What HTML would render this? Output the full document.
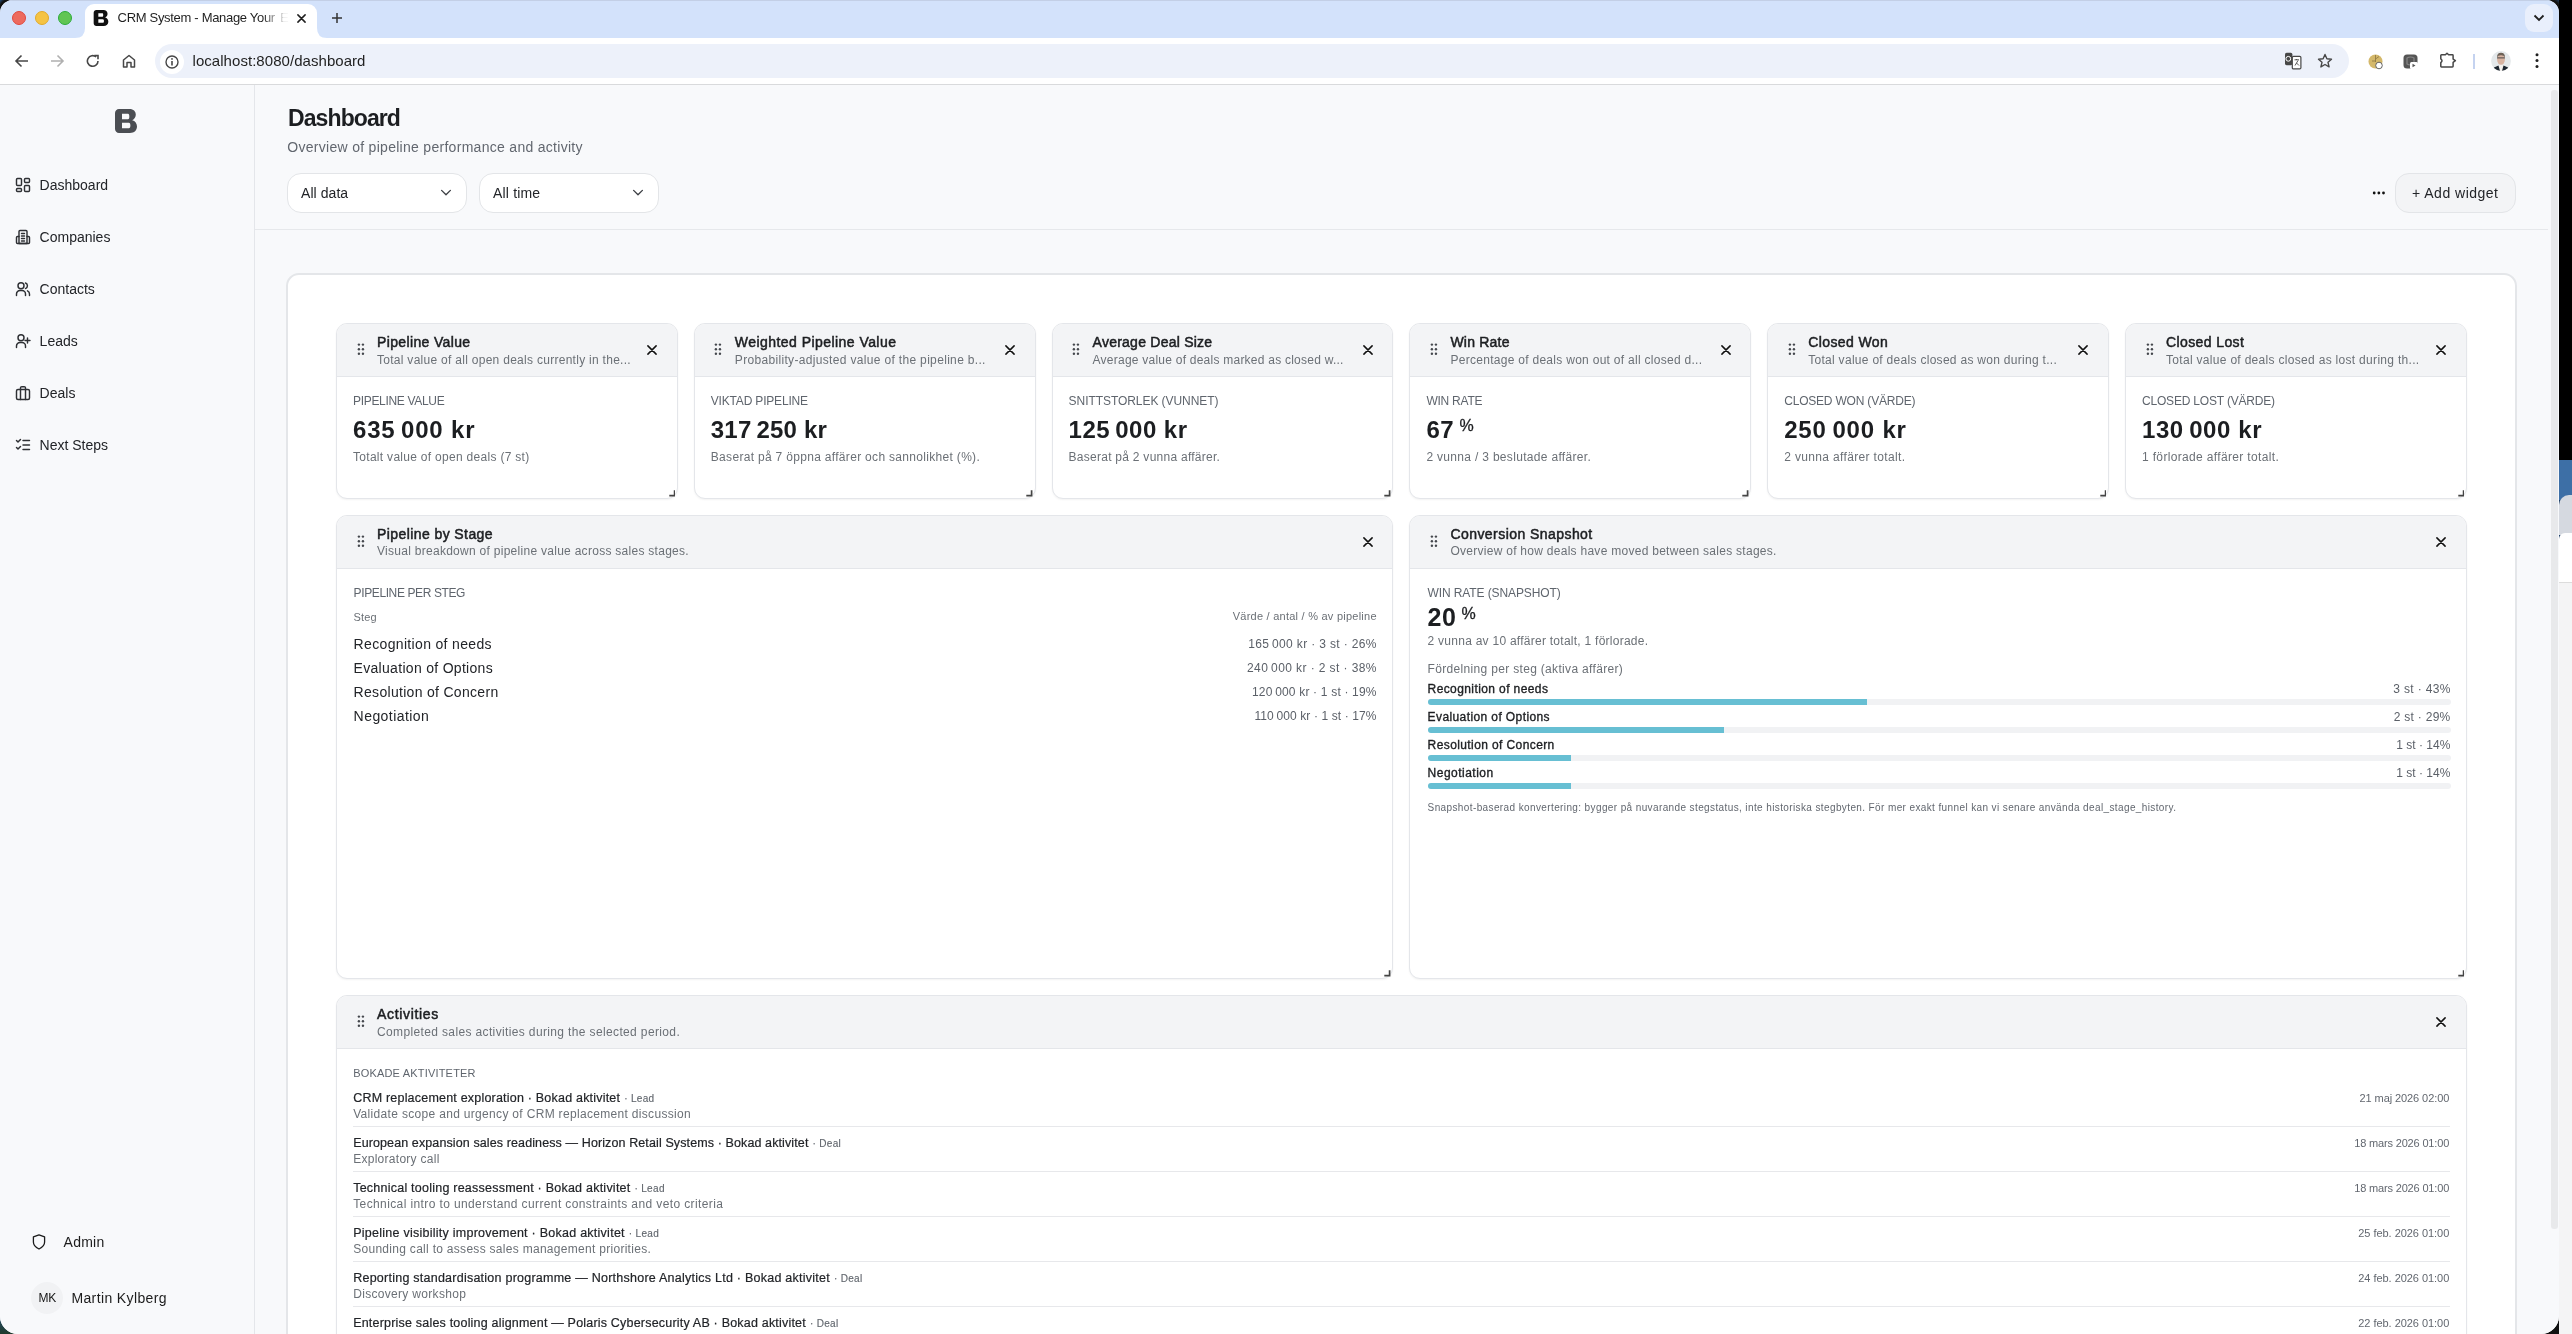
<!DOCTYPE html><html><head><meta charset="utf-8"><style>
html,body{margin:0;padding:0;}
body{width:2572px;height:1334px;overflow:hidden;position:relative;background:#1d3f66;font-family:"Liberation Sans",sans-serif;}
.b{position:absolute;box-sizing:border-box;}
.t{position:absolute;white-space:nowrap;}
#win{will-change:transform;}
</style></head><body>
<div class="b" style="left:2559.00px;top:0.00px;width:13.00px;height:460.00px;background:#000;"></div>
<div class="b" style="left:0.00px;top:0.00px;width:30.00px;height:30.00px;background:radial-gradient(circle at 13px 13px,#000 0,#111 15px,#2b5a90 19px);"></div>
<div class="b" style="left:2530.00px;top:0.00px;width:29.00px;height:30.00px;background:radial-gradient(circle at 16px 13px,#000 0,#111 15px,#24507f 20px);"></div>
<div class="b" style="left:0.00px;top:1300.00px;width:40.00px;height:34.00px;background:linear-gradient(180deg,#2a5a9a,#1f3a2c);"></div>
<div class="b" style="left:2520.00px;top:1300.00px;width:39.00px;height:34.00px;background:#111;"></div>
<div class="b" style="left:2559.00px;top:460.00px;width:13.00px;height:40.00px;background:#3d6fa6;"></div>
<div class="b" style="left:2559.00px;top:495.00px;width:13.00px;height:40.00px;background:#d5d9e0;border-top-left-radius:10px;"></div>
<div class="b" style="left:2559.00px;top:533.00px;width:13.00px;height:50.00px;background:#fff;border-top-left-radius:6px;"></div>
<div class="b" style="left:2559.00px;top:582.00px;width:13.00px;height:752.00px;background:#f4f4f5;border-top:1px solid #dcdcdc;"></div>
<div id="win" class="b" style="left:0;top:0;width:2559px;height:1334px;border-radius:13px 13px 18px 18px;overflow:hidden;background:#f8f9fb;">
<div class="b" style="left:0.00px;top:0.00px;width:2559.00px;height:38.00px;background:#d3e2fb;"></div>
<div class="b" style="left:0.00px;top:0.00px;width:2559.00px;height:1.00px;background:#c3cfe6;"></div>
<div class="b" style="left:85.00px;top:4.00px;width:232.00px;height:34.00px;background:#fff;border-radius:9px 9px 0 0;"></div>
<svg class="b" style="left:75px;top:28px" width="10" height="10"><path d="M0 10 Q10 10 10 0 L10 10 Z" fill="#fff"/></svg>
<svg class="b" style="left:317px;top:28px" width="10" height="10"><path d="M10 10 Q0 10 0 0 L0 10 Z" fill="#fff"/></svg>
<div class="b" style="left:12.00px;top:11.00px;width:14.00px;height:14.00px;background:#ed6a5e;border-radius:50%;border:0.5px solid #e0483e;"></div>
<div class="b" style="left:35.00px;top:11.00px;width:14.00px;height:14.00px;background:#f5c343;border-radius:50%;border:0.5px solid #e0a92a;"></div>
<div class="b" style="left:58.00px;top:11.00px;width:14.00px;height:14.00px;background:#61c554;border-radius:50%;border:0.5px solid #2dac3a;"></div>
<svg class="b" style="left:93px;top:10px" width="16" height="16" viewBox="0 0 22 24"><path d="M4 0 H14.6 C18.4 0 20.8 2.4 20.8 5.6 C20.8 8 19.6 10.2 17.2 11.3 C20.2 12 22 14.6 22 17.6 C22 21.4 19.2 24 15 24 H4 C1.8 24 0 22.2 0 20 V4 C0 1.8 1.8 0 4 0 Z M7 4.8 H13 C14 4.8 14.3 5.7 14.3 7.5 C14.3 9.3 14 10.2 13 10.2 H7 Z M7 13.8 H13.8 C15 13.8 15.4 15 15.4 16.5 C15.4 18 15 19.2 13.8 19.2 H7 Z" fill="#111" fill-rule="evenodd" transform="translate(0,0)"/></svg>
<span class="t" style="left:117.60px;top:11.30px;font-size:13px;line-height:13px;color:#1f1f1f;letter-spacing:-0.310px;">CRM System - Manage Your</span>
<div class="b" style="left:262px;top:8px;width:32px;height:20px;background:linear-gradient(90deg,rgba(255,255,255,0),#fff 70%);"></div>
<span class="t" style="left:280.00px;top:11.30px;font-size:13px;line-height:13px;color:#d0d0d0;">E</span>
<div class="b" style="left:283px;top:8px;width:10px;height:20px;background:linear-gradient(90deg,rgba(255,255,255,0.6),#fff);"></div>
<svg class="b" style="left:296.50px;top:13.50px;" width="9" height="9" viewBox="0 0 9 9"><path d="M0.9 0.9 L8.1 8.1 M8.1 0.9 L0.9 8.1" stroke="#1f1f1f" stroke-width="1.5" stroke-linecap="round"/></svg>
<svg class="b" style="left:332.00px;top:13.00px;" width="10" height="10" viewBox="0 0 10 10"><path d="M5 0 V10 M0 5 H10" stroke="#333" stroke-width="1.5"/></svg>
<div class="b" style="left:2525.00px;top:4.00px;width:28.00px;height:28.00px;background:#e9effc;border-radius:9px;"></div>
<svg class="b" style="left:2533.00px;top:14.00px;" width="12" height="8" viewBox="0 0 12 8"><path d="M1.5 1.5 L6 6 L10.5 1.5" stroke="#1f1f1f" stroke-width="1.8" fill="none"/></svg>
<div class="b" style="left:0.00px;top:38.00px;width:2559.00px;height:47.00px;background:#fff;border-bottom:1px solid #d9dadc;"></div>
<svg class="b" style="left:14.00px;top:54.00px;" width="15" height="14" viewBox="0 0 15 14"><path d="M14 7 H2 M7.5 1.5 L2 7 L7.5 12.5" stroke="#474747" stroke-width="1.6" fill="none"/></svg>
<svg class="b" style="left:50.00px;top:54.00px;" width="15" height="14" viewBox="0 0 15 14"><path d="M1 7 H13 M7.5 1.5 L13 7 L7.5 12.5" stroke="#b0b0b0" stroke-width="1.6" fill="none"/></svg>
<svg class="b" style="left:86.00px;top:54.00px;" width="14" height="14" viewBox="0 0 14 14"><path d="M12 7 A5.3 5.3 0 1 1 10.2 3" stroke="#474747" stroke-width="1.6" fill="none"/><path d="M8.3 1.5 H12 V5.2" stroke="#474747" stroke-width="1.6" fill="none"/></svg>
<svg class="b" style="left:122.00px;top:54.00px;" width="14" height="14" viewBox="0 0 14 14"><path d="M1.5 13 V6 L7 1.5 L12.5 6 V13 H9 V8.5 H5 V13 Z" stroke="#474747" stroke-width="1.5" fill="none" stroke-linejoin="round"/></svg>
<div class="b" style="left:155.00px;top:44.00px;width:2194.00px;height:34.00px;background:#edf1fa;border-radius:17px;"></div>
<div class="b" style="left:160.00px;top:49.50px;width:24.00px;height:24.00px;background:#fff;border-radius:50%;"></div>
<svg class="b" style="left:165.00px;top:54.50px;" width="14" height="14" viewBox="0 0 14 14"><circle cx="7" cy="7" r="6" stroke="#474747" stroke-width="1.4" fill="none"/><path d="M7 6 V10.5" stroke="#474747" stroke-width="1.6"/><circle cx="7" cy="3.9" r="0.9" fill="#474747"/></svg>
<span class="t" style="left:192.50px;top:53.30px;font-size:15px;line-height:15px;color:#1f1f1f;letter-spacing:0.050px;">localhost:8080/dashboard</span>
<svg class="b" style="left:2284.00px;top:52.00px;" width="18" height="18" viewBox="0 0 18 18"><rect x="1" y="0.8" width="7.4" height="12.4" rx="1.6" fill="#474747"/><circle cx="4.3" cy="6.8" r="2.4" stroke="#fff" stroke-width="1" fill="none"/><rect x="8.3" y="4.3" width="8.6" height="12.6" rx="1.2" fill="#fff" stroke="#474747" stroke-width="1.2"/><path d="M10.5 7.8 H15 M12.6 7 V8 M11 13.5 L14 8.5 M12.5 11 L15 13.5" stroke="#474747" stroke-width="0.9" fill="none"/></svg>
<svg class="b" style="left:2317.00px;top:53.00px;" width="16" height="16" viewBox="0 0 16 16"><path d="M8 1.5 L9.9 5.8 L14.5 6.2 L11 9.3 L12.1 13.9 L8 11.5 L3.9 13.9 L5 9.3 L1.5 6.2 L6.1 5.8 Z" stroke="#474747" stroke-width="1.4" fill="none" stroke-linejoin="round"/></svg>
<svg class="b" style="left:2368.00px;top:54.00px;" width="16" height="16" viewBox="0 0 16 16"><circle cx="7.5" cy="7.5" r="7" fill="#d4b86a"/><path d="M7.5 1 V8 M7.5 5 L11 2.5 M4 7 H7.5" stroke="#8a7440" stroke-width="0.8"/><circle cx="11" cy="11.5" r="3.3" fill="#fff" stroke="#555" stroke-width="0.9"/></svg>
<svg class="b" style="left:2403.00px;top:54.00px;" width="16" height="16" viewBox="0 0 16 16"><rect x="0.5" y="0.5" width="14" height="14" rx="3.5" fill="#555"/><path d="M4 4 Q7.5 2 11 4 V10 Q7.5 12 4 10 Z" fill="none" stroke="#888" stroke-width="1.2"/><rect x="7" y="8" width="8" height="7" rx="1.5" fill="#fff"/><path d="M9.5 9.7 L12.5 11.5 L9.5 13.3 Z" fill="#555"/></svg>
<svg class="b" style="left:2438.00px;top:51.00px;" width="20" height="20" viewBox="0 0 20 20"><path d="M2.8 4.5 Q2.8 3.8 3.5 3.8 H7.4 L9 2.2 L10.6 3.8 H14.4 Q15.1 3.8 15.1 4.5 V8.1 L17.4 9.7 L15.1 11.3 V15.2 Q15.1 15.9 14.4 15.9 H3.5 Q2.8 15.9 2.8 15.2 V11.6 Q5.2 9.7 2.8 7.8 Z" stroke="#474747" stroke-width="1.5" fill="none" stroke-linejoin="round"/></svg>
<div class="b" style="left:2473.00px;top:53.50px;width:1.50px;height:15.00px;background:#c5d3f0;"></div>
<svg class="b" style="left:2491.00px;top:50.70px;" width="20" height="20" viewBox="0 0 20 20"><defs><clipPath id="av"><circle cx="10" cy="10" r="9.9"/></clipPath></defs><g clip-path="url(#av)"><rect width="20" height="20" fill="#e4e8ea"/><path d="M4 20 L6 15 L10 13.5 L14 15 L16.5 20 Z" fill="#f4f1ee"/><path d="M1.5 20 L3 16.5 L7.5 14.5 L9 20 Z M18.5 20 L17 16.5 L12.5 14.5 L11 20 Z" fill="#1d2630"/><ellipse cx="10" cy="8.6" rx="3.9" ry="5.2" fill="#d8b4a2"/><path d="M5.9 6.2 Q6.2 1.8 10 1.8 Q13.8 1.8 14.1 6.2 Q12.5 4.2 10 4.3 Q7.5 4.2 5.9 6.2 Z" fill="#6e6257"/><path d="M6 6.9 H14" stroke="#3a3a3a" stroke-width="0.9"/></g></svg>
<svg class="b" style="left:2532.00px;top:50.00px;" width="10" height="22" viewBox="0 0 10 22"><circle cx="5" cy="4.80" r="1.5" fill="#1f1f1f"/><circle cx="5" cy="10.60" r="1.5" fill="#1f1f1f"/><circle cx="5" cy="16.40" r="1.5" fill="#1f1f1f"/></svg>
<div class="b" style="left:0.00px;top:85.00px;width:2559.00px;height:1249.00px;background:#f8f9fb;"></div>
<div class="b" style="left:254.00px;top:85.00px;width:1.00px;height:1249.00px;background:#e4e6ea;"></div>
<svg class="b" style="left:115.00px;top:109.00px;" width="22" height="24" viewBox="0 0 22 24"><path d="M4 0 H14.6 C18.4 0 20.8 2.4 20.8 5.6 C20.8 8 19.6 10.2 17.2 11.3 C20.2 12 22 14.6 22 17.6 C22 21.4 19.2 24 15 24 H4 C1.8 24 0 22.2 0 20 V4 C0 1.8 1.8 0 4 0 Z M7 4.8 H13 C14 4.8 14.3 5.7 14.3 7.5 C14.3 9.3 14 10.2 13 10.2 H7 Z M7 13.8 H13.8 C15 13.8 15.4 15 15.4 16.5 C15.4 18 15 19.2 13.8 19.2 H7 Z" fill="#4b4e53" fill-rule="evenodd"/></svg>
<span class="t" style="left:39.60px;top:177.95px;font-size:14px;line-height:14px;color:#222428;">Dashboard</span>
<span class="t" style="left:39.60px;top:229.85px;font-size:14px;line-height:14px;color:#222428;">Companies</span>
<span class="t" style="left:39.60px;top:281.85px;font-size:14px;line-height:14px;color:#222428;">Contacts</span>
<span class="t" style="left:39.60px;top:333.85px;font-size:14px;line-height:14px;color:#222428;">Leads</span>
<span class="t" style="left:39.60px;top:385.85px;font-size:14px;line-height:14px;color:#222428;">Deals</span>
<span class="t" style="left:39.60px;top:437.85px;font-size:14px;line-height:14px;color:#222428;">Next Steps</span>
<svg class="b" style="left:15.00px;top:177.00px;" width="16" height="16" viewBox="0 0 16 16"><rect x="1.5" y="1.5" width="5" height="7" rx="1" stroke="#2e3034" stroke-width="1.45" fill="none" stroke-linecap="round" stroke-linejoin="round"/><rect x="9.5" y="1.5" width="5" height="4" rx="1" stroke="#2e3034" stroke-width="1.45" fill="none" stroke-linecap="round" stroke-linejoin="round"/><rect x="9.5" y="8.5" width="5" height="6" rx="1" stroke="#2e3034" stroke-width="1.45" fill="none" stroke-linecap="round" stroke-linejoin="round"/><rect x="1.5" y="11.5" width="5" height="3" rx="1" stroke="#2e3034" stroke-width="1.45" fill="none" stroke-linecap="round" stroke-linejoin="round"/></svg>
<svg class="b" style="left:15.00px;top:229.00px;" width="16" height="16" viewBox="0 0 16 16"><path d="M4 14.5 V2.5 A1 1 0 0 1 5 1.5 H11 A1 1 0 0 1 12 2.5 V14.5 Z" stroke="#2e3034" stroke-width="1.45" fill="none" stroke-linecap="round" stroke-linejoin="round"/><path d="M4 7.5 H2.5 A1 1 0 0 0 1.5 8.5 V13.5 A1 1 0 0 0 2.5 14.5 H13.5 A1 1 0 0 0 14.5 13.5 V8.5 A1 1 0 0 0 13.5 7.5 H12" stroke="#2e3034" stroke-width="1.45" fill="none" stroke-linecap="round" stroke-linejoin="round"/><path d="M6.5 4.5 H9.5 M6.5 7 H9.5 M6.5 9.5 H9.5 M6.5 12 H9.5" stroke="#2e3034" stroke-width="1.45" fill="none" stroke-linecap="round" stroke-linejoin="round"/></svg>
<svg class="b" style="left:15.00px;top:281.00px;" width="16" height="16" viewBox="0 0 16 16"><circle cx="6" cy="4.8" r="3" stroke="#2e3034" stroke-width="1.45" fill="none" stroke-linecap="round" stroke-linejoin="round"/><path d="M1.5 14.5 V13 A3.5 3.5 0 0 1 5 9.5 H7 A3.5 3.5 0 0 1 10.5 13 V14.5" stroke="#2e3034" stroke-width="1.45" fill="none" stroke-linecap="round" stroke-linejoin="round"/><path d="M10.5 2 A3 3 0 0 1 10.5 7.6 M14.5 14.5 V13 A3.5 3.5 0 0 0 12.5 9.8" stroke="#2e3034" stroke-width="1.45" fill="none" stroke-linecap="round" stroke-linejoin="round"/></svg>
<svg class="b" style="left:15.00px;top:333.00px;" width="16" height="16" viewBox="0 0 16 16"><circle cx="6" cy="4.8" r="3" stroke="#2e3034" stroke-width="1.45" fill="none" stroke-linecap="round" stroke-linejoin="round"/><path d="M1.5 14.5 V13 A3.5 3.5 0 0 1 5 9.5 H7 A3.5 3.5 0 0 1 10.5 13 V14.5" stroke="#2e3034" stroke-width="1.45" fill="none" stroke-linecap="round" stroke-linejoin="round"/><path d="M12.5 5 V10 M10 7.5 H15" stroke="#2e3034" stroke-width="1.45" fill="none" stroke-linecap="round" stroke-linejoin="round"/></svg>
<svg class="b" style="left:15.00px;top:385.00px;" width="16" height="16" viewBox="0 0 16 16"><rect x="1.5" y="4.5" width="13" height="10" rx="1.5" stroke="#2e3034" stroke-width="1.45" fill="none" stroke-linecap="round" stroke-linejoin="round"/><path d="M5.5 14.5 V3 A1.3 1.3 0 0 1 6.8 1.7 H9.2 A1.3 1.3 0 0 1 10.5 3 V14.5" stroke="#2e3034" stroke-width="1.45" fill="none" stroke-linecap="round" stroke-linejoin="round"/></svg>
<svg class="b" style="left:15.00px;top:437.00px;" width="16" height="16" viewBox="0 0 16 16"><path d="M1.5 3.5 L3 5 L5.5 2.5 M1.5 10.5 L3 12 L5.5 9.5" stroke="#2e3034" stroke-width="1.45" fill="none" stroke-linecap="round" stroke-linejoin="round"/><path d="M8 3.5 H14.5 M8 8 H14.5 M8 12.5 H14.5" stroke="#2e3034" stroke-width="1.45" fill="none" stroke-linecap="round" stroke-linejoin="round"/></svg>
<svg class="b" style="left:31.00px;top:1233.00px;" width="16" height="18" viewBox="0 0 16 18"><path d="M8 1.9 L13.6 3.9 V9 C13.6 12.3 11 14.6 8 16 C5 14.6 2.4 12.3 2.4 9 V3.9 Z" stroke="#1c1c1c" stroke-width="1.3" fill="none" stroke-linejoin="round"/></svg>
<span class="t" style="left:63.60px;top:1235.05px;font-size:14px;line-height:14px;color:#1c1c1c;letter-spacing:0.223px;">Admin</span>
<div class="b" style="left:31.00px;top:1282.00px;width:32.00px;height:32.00px;background:#f1f2f4;border-radius:50%;"></div>
<span class="t" style="left:38.50px;top:1291.84px;font-size:12px;line-height:12px;color:#151515;letter-spacing:-0.250px;">MK</span>
<span class="t" style="left:71.40px;top:1291.15px;font-size:14px;line-height:14px;color:#1c1c1c;letter-spacing:0.382px;">Martin Kylberg</span>
<span class="t" style="left:288.00px;top:107.43px;font-size:23px;line-height:23px;color:#1c1e21;font-weight:700;letter-spacing:-0.904px;">Dashboard</span>
<span class="t" style="left:287.30px;top:139.85px;font-size:14px;line-height:14px;color:#62676f;letter-spacing:0.290px;">Overview of pipeline performance and activity</span>
<div class="b" style="left:287.30px;top:173.30px;width:179.60px;height:39.50px;background:#fff;border:1px solid #e3e5e8;border-radius:14px;"></div>
<span class="t" style="left:301.00px;top:186.15px;font-size:14px;line-height:14px;color:#222428;letter-spacing:0.063px;">All data</span>
<svg class="b" style="left:439.80px;top:189.00px;" width="12" height="8" viewBox="0 0 12 8"><path d="M1.6 1.4 L6 5.8 L10.4 1.4" stroke="#3b3e43" stroke-width="1.3" fill="none" stroke-linecap="round" stroke-linejoin="round"/></svg>
<div class="b" style="left:479.40px;top:173.30px;width:179.60px;height:39.50px;background:#fff;border:1px solid #e3e5e8;border-radius:14px;"></div>
<span class="t" style="left:493.10px;top:186.15px;font-size:14px;line-height:14px;color:#222428;letter-spacing:0.150px;">All time</span>
<svg class="b" style="left:631.90px;top:189.00px;" width="12" height="8" viewBox="0 0 12 8"><path d="M1.6 1.4 L6 5.8 L10.4 1.4" stroke="#3b3e43" stroke-width="1.3" fill="none" stroke-linecap="round" stroke-linejoin="round"/></svg>
<div class="b" style="left:255.00px;top:229.00px;width:2293.00px;height:1.00px;background:#e6e8eb;"></div>
<svg class="b" style="left:2371.00px;top:190.00px;" width="16" height="6" viewBox="0 0 16 6"><circle cx="3.20" cy="3" r="1.4" fill="#111"/><circle cx="7.85" cy="3" r="1.4" fill="#111"/><circle cx="12.50" cy="3" r="1.4" fill="#111"/></svg>
<div class="b" style="left:2395.30px;top:173.10px;width:120.40px;height:39.50px;background:#f3f4f6;border:1px solid #e3e5e8;border-radius:14px;"></div>
<span class="t" style="left:2412.00px;top:186.35px;font-size:14px;line-height:14px;color:#222428;letter-spacing:0.495px;">+ Add widget</span>
<div class="b" style="left:2551.00px;top:90.00px;width:6.50px;height:1139.00px;background:#e8e9eb;border-radius:3px;"></div>
<div class="b" style="left:286.00px;top:273.00px;width:2231.00px;height:1100.00px;background:#fff;border:2px solid #e4e6e9;border-radius:13px;"></div>
<div class="b" style="left:336.00px;top:323.20px;width:341.80px;height:176.00px;background:#fff;border:1px solid #e4e6ea;border-radius:11px;box-shadow:0 1px 2px rgba(0,0,0,0.05);overflow:hidden;"></div>
<div class="b" style="left:337.00px;top:324.20px;width:339.80px;height:53.00px;background:#f3f4f6;border-bottom:1px solid #e4e6ea;border-radius:10px 10px 0 0;"></div>
<svg class="b" style="left:356.50px;top:343.40px;" width="9" height="14" viewBox="0 0 9 14"><circle cx="1.90" cy="1.60" r="1.2" fill="#44474d"/><circle cx="5.95" cy="1.60" r="1.2" fill="#44474d"/><circle cx="1.90" cy="6.20" r="1.2" fill="#44474d"/><circle cx="5.95" cy="6.20" r="1.2" fill="#44474d"/><circle cx="1.90" cy="10.80" r="1.2" fill="#44474d"/><circle cx="5.95" cy="10.80" r="1.2" fill="#44474d"/></svg>
<span class="t" style="left:377.00px;top:334.75px;font-size:14px;line-height:14px;color:#1c1e21;letter-spacing:0.359px;-webkit-text-stroke:0.5px #1c1e21;">Pipeline Value</span>
<span class="t" style="left:377.00px;top:353.54px;font-size:12px;line-height:12px;color:#6b7076;letter-spacing:0.282px;">Total value of all open deals currently in the...</span>
<svg class="b" style="left:647.20px;top:344.70px;" width="10" height="10" viewBox="0 0 10 10"><path d="M0.9 0.9 L9.1 9.1 M9.1 0.9 L0.9 9.1" stroke="#111" stroke-width="1.5" stroke-linecap="round"/></svg>
<svg class="b" style="left:668.60px;top:490.20px;" width="6.5" height="6.5" viewBox="0 0 6.5 6.5"><path d="M5.6 0.3 V5.6 H0.3" stroke="#444" stroke-width="1.7" fill="none"/></svg>
<span class="t" style="left:353.00px;top:395.24px;font-size:12px;line-height:12px;color:#5f656d;letter-spacing:-0.316px;">PIPELINE VALUE</span>
<span class="t" style="left:353.00px;top:417.98px;font-size:24px;line-height:24px;color:#1c1e21;font-weight:700;letter-spacing:0.805px;">635 000 kr</span>
<span class="t" style="left:353.00px;top:451.04px;font-size:12px;line-height:12px;color:#6b7076;letter-spacing:0.295px;">Totalt value of open deals (7 st)</span>
<div class="b" style="left:693.80px;top:323.20px;width:341.80px;height:176.00px;background:#fff;border:1px solid #e4e6ea;border-radius:11px;box-shadow:0 1px 2px rgba(0,0,0,0.05);overflow:hidden;"></div>
<div class="b" style="left:694.80px;top:324.20px;width:339.80px;height:53.00px;background:#f3f4f6;border-bottom:1px solid #e4e6ea;border-radius:10px 10px 0 0;"></div>
<svg class="b" style="left:714.30px;top:343.40px;" width="9" height="14" viewBox="0 0 9 14"><circle cx="1.90" cy="1.60" r="1.2" fill="#44474d"/><circle cx="5.95" cy="1.60" r="1.2" fill="#44474d"/><circle cx="1.90" cy="6.20" r="1.2" fill="#44474d"/><circle cx="5.95" cy="6.20" r="1.2" fill="#44474d"/><circle cx="1.90" cy="10.80" r="1.2" fill="#44474d"/><circle cx="5.95" cy="10.80" r="1.2" fill="#44474d"/></svg>
<span class="t" style="left:734.80px;top:334.75px;font-size:14px;line-height:14px;color:#1c1e21;letter-spacing:0.450px;-webkit-text-stroke:0.5px #1c1e21;">Weighted Pipeline Value</span>
<span class="t" style="left:734.80px;top:353.54px;font-size:12px;line-height:12px;color:#6b7076;letter-spacing:0.330px;">Probability-adjusted value of the pipeline b...</span>
<svg class="b" style="left:1005.00px;top:344.70px;" width="10" height="10" viewBox="0 0 10 10"><path d="M0.9 0.9 L9.1 9.1 M9.1 0.9 L0.9 9.1" stroke="#111" stroke-width="1.5" stroke-linecap="round"/></svg>
<svg class="b" style="left:1026.40px;top:490.20px;" width="6.5" height="6.5" viewBox="0 0 6.5 6.5"><path d="M5.6 0.3 V5.6 H0.3" stroke="#444" stroke-width="1.7" fill="none"/></svg>
<span class="t" style="left:710.80px;top:395.24px;font-size:12px;line-height:12px;color:#5f656d;letter-spacing:-0.181px;">VIKTAD PIPELINE</span>
<span class="t" style="left:710.80px;top:417.98px;font-size:24px;line-height:24px;color:#1c1e21;font-weight:700;letter-spacing:0.195px;">317 250 kr</span>
<span class="t" style="left:710.80px;top:451.04px;font-size:12px;line-height:12px;color:#6b7076;letter-spacing:0.312px;">Baserat på 7 öppna affärer och sannolikhet (%).</span>
<div class="b" style="left:1051.60px;top:323.20px;width:341.80px;height:176.00px;background:#fff;border:1px solid #e4e6ea;border-radius:11px;box-shadow:0 1px 2px rgba(0,0,0,0.05);overflow:hidden;"></div>
<div class="b" style="left:1052.60px;top:324.20px;width:339.80px;height:53.00px;background:#f3f4f6;border-bottom:1px solid #e4e6ea;border-radius:10px 10px 0 0;"></div>
<svg class="b" style="left:1072.10px;top:343.40px;" width="9" height="14" viewBox="0 0 9 14"><circle cx="1.90" cy="1.60" r="1.2" fill="#44474d"/><circle cx="5.95" cy="1.60" r="1.2" fill="#44474d"/><circle cx="1.90" cy="6.20" r="1.2" fill="#44474d"/><circle cx="5.95" cy="6.20" r="1.2" fill="#44474d"/><circle cx="1.90" cy="10.80" r="1.2" fill="#44474d"/><circle cx="5.95" cy="10.80" r="1.2" fill="#44474d"/></svg>
<span class="t" style="left:1092.60px;top:334.75px;font-size:14px;line-height:14px;color:#1c1e21;letter-spacing:0.241px;-webkit-text-stroke:0.5px #1c1e21;">Average Deal Size</span>
<span class="t" style="left:1092.60px;top:353.54px;font-size:12px;line-height:12px;color:#6b7076;letter-spacing:0.237px;">Average value of deals marked as closed w...</span>
<svg class="b" style="left:1362.80px;top:344.70px;" width="10" height="10" viewBox="0 0 10 10"><path d="M0.9 0.9 L9.1 9.1 M9.1 0.9 L0.9 9.1" stroke="#111" stroke-width="1.5" stroke-linecap="round"/></svg>
<svg class="b" style="left:1384.20px;top:490.20px;" width="6.5" height="6.5" viewBox="0 0 6.5 6.5"><path d="M5.6 0.3 V5.6 H0.3" stroke="#444" stroke-width="1.7" fill="none"/></svg>
<span class="t" style="left:1068.60px;top:395.24px;font-size:12px;line-height:12px;color:#5f656d;letter-spacing:-0.059px;">SNITTSTORLEK (VUNNET)</span>
<span class="t" style="left:1068.60px;top:417.98px;font-size:24px;line-height:24px;color:#1c1e21;font-weight:700;letter-spacing:0.465px;">125 000 kr</span>
<span class="t" style="left:1068.60px;top:451.04px;font-size:12px;line-height:12px;color:#6b7076;letter-spacing:0.261px;">Baserat på 2 vunna affärer.</span>
<div class="b" style="left:1409.40px;top:323.20px;width:341.80px;height:176.00px;background:#fff;border:1px solid #e4e6ea;border-radius:11px;box-shadow:0 1px 2px rgba(0,0,0,0.05);overflow:hidden;"></div>
<div class="b" style="left:1410.40px;top:324.20px;width:339.80px;height:53.00px;background:#f3f4f6;border-bottom:1px solid #e4e6ea;border-radius:10px 10px 0 0;"></div>
<svg class="b" style="left:1429.90px;top:343.40px;" width="9" height="14" viewBox="0 0 9 14"><circle cx="1.90" cy="1.60" r="1.2" fill="#44474d"/><circle cx="5.95" cy="1.60" r="1.2" fill="#44474d"/><circle cx="1.90" cy="6.20" r="1.2" fill="#44474d"/><circle cx="5.95" cy="6.20" r="1.2" fill="#44474d"/><circle cx="1.90" cy="10.80" r="1.2" fill="#44474d"/><circle cx="5.95" cy="10.80" r="1.2" fill="#44474d"/></svg>
<span class="t" style="left:1450.40px;top:334.75px;font-size:14px;line-height:14px;color:#1c1e21;letter-spacing:0.216px;-webkit-text-stroke:0.5px #1c1e21;">Win Rate</span>
<span class="t" style="left:1450.40px;top:353.54px;font-size:12px;line-height:12px;color:#6b7076;letter-spacing:0.286px;">Percentage of deals won out of all closed d...</span>
<svg class="b" style="left:1720.60px;top:344.70px;" width="10" height="10" viewBox="0 0 10 10"><path d="M0.9 0.9 L9.1 9.1 M9.1 0.9 L0.9 9.1" stroke="#111" stroke-width="1.5" stroke-linecap="round"/></svg>
<svg class="b" style="left:1742.00px;top:490.20px;" width="6.5" height="6.5" viewBox="0 0 6.5 6.5"><path d="M5.6 0.3 V5.6 H0.3" stroke="#444" stroke-width="1.7" fill="none"/></svg>
<span class="t" style="left:1426.40px;top:395.24px;font-size:12px;line-height:12px;color:#5f656d;letter-spacing:-0.234px;">WIN RATE</span>
<span class="t" style="left:1426.40px;top:417.98px;font-size:24px;line-height:24px;color:#1c1e21;font-weight:700;letter-spacing:0.552px;">67</span>
<span class="t" style="left:1459.60px;top:418.26px;font-size:16px;line-height:16px;color:#1c1e21;-webkit-text-stroke:0.3px #1c1e21;">%</span>
<span class="t" style="left:1426.40px;top:451.04px;font-size:12px;line-height:12px;color:#6b7076;letter-spacing:0.315px;">2 vunna / 3 beslutade affärer.</span>
<div class="b" style="left:1767.20px;top:323.20px;width:341.80px;height:176.00px;background:#fff;border:1px solid #e4e6ea;border-radius:11px;box-shadow:0 1px 2px rgba(0,0,0,0.05);overflow:hidden;"></div>
<div class="b" style="left:1768.20px;top:324.20px;width:339.80px;height:53.00px;background:#f3f4f6;border-bottom:1px solid #e4e6ea;border-radius:10px 10px 0 0;"></div>
<svg class="b" style="left:1787.70px;top:343.40px;" width="9" height="14" viewBox="0 0 9 14"><circle cx="1.90" cy="1.60" r="1.2" fill="#44474d"/><circle cx="5.95" cy="1.60" r="1.2" fill="#44474d"/><circle cx="1.90" cy="6.20" r="1.2" fill="#44474d"/><circle cx="5.95" cy="6.20" r="1.2" fill="#44474d"/><circle cx="1.90" cy="10.80" r="1.2" fill="#44474d"/><circle cx="5.95" cy="10.80" r="1.2" fill="#44474d"/></svg>
<span class="t" style="left:1808.20px;top:334.75px;font-size:14px;line-height:14px;color:#1c1e21;letter-spacing:0.400px;-webkit-text-stroke:0.5px #1c1e21;">Closed Won</span>
<span class="t" style="left:1808.20px;top:353.54px;font-size:12px;line-height:12px;color:#6b7076;letter-spacing:0.292px;">Total value of deals closed as won during t...</span>
<svg class="b" style="left:2078.40px;top:344.70px;" width="10" height="10" viewBox="0 0 10 10"><path d="M0.9 0.9 L9.1 9.1 M9.1 0.9 L0.9 9.1" stroke="#111" stroke-width="1.5" stroke-linecap="round"/></svg>
<svg class="b" style="left:2099.80px;top:490.20px;" width="6.5" height="6.5" viewBox="0 0 6.5 6.5"><path d="M5.6 0.3 V5.6 H0.3" stroke="#444" stroke-width="1.7" fill="none"/></svg>
<span class="t" style="left:1784.20px;top:395.24px;font-size:12px;line-height:12px;color:#5f656d;letter-spacing:-0.199px;">CLOSED WON (VÄRDE)</span>
<span class="t" style="left:1784.20px;top:417.98px;font-size:24px;line-height:24px;color:#1c1e21;font-weight:700;letter-spacing:0.835px;">250 000 kr</span>
<span class="t" style="left:1784.20px;top:451.04px;font-size:12px;line-height:12px;color:#6b7076;letter-spacing:0.348px;">2 vunna affärer totalt.</span>
<div class="b" style="left:2125.00px;top:323.20px;width:341.80px;height:176.00px;background:#fff;border:1px solid #e4e6ea;border-radius:11px;box-shadow:0 1px 2px rgba(0,0,0,0.05);overflow:hidden;"></div>
<div class="b" style="left:2126.00px;top:324.20px;width:339.80px;height:53.00px;background:#f3f4f6;border-bottom:1px solid #e4e6ea;border-radius:10px 10px 0 0;"></div>
<svg class="b" style="left:2145.50px;top:343.40px;" width="9" height="14" viewBox="0 0 9 14"><circle cx="1.90" cy="1.60" r="1.2" fill="#44474d"/><circle cx="5.95" cy="1.60" r="1.2" fill="#44474d"/><circle cx="1.90" cy="6.20" r="1.2" fill="#44474d"/><circle cx="5.95" cy="6.20" r="1.2" fill="#44474d"/><circle cx="1.90" cy="10.80" r="1.2" fill="#44474d"/><circle cx="5.95" cy="10.80" r="1.2" fill="#44474d"/></svg>
<span class="t" style="left:2166.00px;top:334.75px;font-size:14px;line-height:14px;color:#1c1e21;letter-spacing:0.397px;-webkit-text-stroke:0.5px #1c1e21;">Closed Lost</span>
<span class="t" style="left:2166.00px;top:353.54px;font-size:12px;line-height:12px;color:#6b7076;letter-spacing:0.306px;">Total value of deals closed as lost during th...</span>
<svg class="b" style="left:2436.20px;top:344.70px;" width="10" height="10" viewBox="0 0 10 10"><path d="M0.9 0.9 L9.1 9.1 M9.1 0.9 L0.9 9.1" stroke="#111" stroke-width="1.5" stroke-linecap="round"/></svg>
<svg class="b" style="left:2457.60px;top:490.20px;" width="6.5" height="6.5" viewBox="0 0 6.5 6.5"><path d="M5.6 0.3 V5.6 H0.3" stroke="#444" stroke-width="1.7" fill="none"/></svg>
<span class="t" style="left:2142.00px;top:395.24px;font-size:12px;line-height:12px;color:#5f656d;letter-spacing:-0.188px;">CLOSED LOST (VÄRDE)</span>
<span class="t" style="left:2142.00px;top:417.98px;font-size:24px;line-height:24px;color:#1c1e21;font-weight:700;letter-spacing:0.585px;">130 000 kr</span>
<span class="t" style="left:2142.00px;top:451.04px;font-size:12px;line-height:12px;color:#6b7076;letter-spacing:0.342px;">1 förlorade affärer totalt.</span>
<div class="b" style="left:336.00px;top:515.10px;width:1057.40px;height:464.00px;background:#fff;border:1px solid #e4e6ea;border-radius:11px;box-shadow:0 1px 2px rgba(0,0,0,0.05);overflow:hidden;"></div>
<div class="b" style="left:337.00px;top:516.10px;width:1055.40px;height:53.00px;background:#f3f4f6;border-bottom:1px solid #e4e6ea;border-radius:10px 10px 0 0;"></div>
<svg class="b" style="left:356.50px;top:535.30px;" width="9" height="14" viewBox="0 0 9 14"><circle cx="1.90" cy="1.60" r="1.2" fill="#44474d"/><circle cx="5.95" cy="1.60" r="1.2" fill="#44474d"/><circle cx="1.90" cy="6.20" r="1.2" fill="#44474d"/><circle cx="5.95" cy="6.20" r="1.2" fill="#44474d"/><circle cx="1.90" cy="10.80" r="1.2" fill="#44474d"/><circle cx="5.95" cy="10.80" r="1.2" fill="#44474d"/></svg>
<span class="t" style="left:377.00px;top:526.65px;font-size:14px;line-height:14px;color:#1c1e21;letter-spacing:0.414px;-webkit-text-stroke:0.5px #1c1e21;">Pipeline by Stage</span>
<span class="t" style="left:377.00px;top:545.44px;font-size:12px;line-height:12px;color:#6b7076;letter-spacing:0.279px;">Visual breakdown of pipeline value across sales stages.</span>
<svg class="b" style="left:1362.80px;top:536.60px;" width="10" height="10" viewBox="0 0 10 10"><path d="M0.9 0.9 L9.1 9.1 M9.1 0.9 L0.9 9.1" stroke="#111" stroke-width="1.5" stroke-linecap="round"/></svg>
<svg class="b" style="left:1384.20px;top:970.10px;" width="6.5" height="6.5" viewBox="0 0 6.5 6.5"><path d="M5.6 0.3 V5.6 H0.3" stroke="#444" stroke-width="1.7" fill="none"/></svg>
<span class="t" style="left:353.60px;top:586.84px;font-size:12px;line-height:12px;color:#5f656d;letter-spacing:-0.391px;">PIPELINE PER STEG</span>
<span class="t" style="left:353.60px;top:611.69px;font-size:11px;line-height:11px;color:#6b7076;letter-spacing:0.118px;">Steg</span>
<span class="t" style="right:1182.26px;top:611.49px;font-size:11px;line-height:11px;color:#6b7076;letter-spacing:0.242px;">Värde / antal / % av pipeline</span>
<span class="t" style="left:353.60px;top:637.05px;font-size:14px;line-height:14px;color:#222428;letter-spacing:0.338px;">Recognition of needs</span>
<span class="t" style="right:1182.14px;top:637.64px;font-size:12px;line-height:12px;color:#5b6068;letter-spacing:0.358px;">165 000 kr · 3 st · 26%</span>
<span class="t" style="left:353.60px;top:660.95px;font-size:14px;line-height:14px;color:#222428;letter-spacing:0.301px;">Evaluation of Options</span>
<span class="t" style="right:1182.09px;top:661.64px;font-size:12px;line-height:12px;color:#5b6068;letter-spacing:0.410px;">240 000 kr · 2 st · 38%</span>
<span class="t" style="left:353.60px;top:684.85px;font-size:14px;line-height:14px;color:#222428;letter-spacing:0.304px;">Resolution of Concern</span>
<span class="t" style="right:1182.32px;top:685.64px;font-size:12px;line-height:12px;color:#5b6068;letter-spacing:0.184px;">120 000 kr · 1 st · 19%</span>
<span class="t" style="left:353.60px;top:708.75px;font-size:14px;line-height:14px;color:#222428;letter-spacing:0.443px;">Negotiation</span>
<span class="t" style="right:1182.39px;top:709.64px;font-size:12px;line-height:12px;color:#5b6068;letter-spacing:0.114px;">110 000 kr · 1 st · 17%</span>
<div class="b" style="left:1409.40px;top:515.10px;width:1057.40px;height:464.00px;background:#fff;border:1px solid #e4e6ea;border-radius:11px;box-shadow:0 1px 2px rgba(0,0,0,0.05);overflow:hidden;"></div>
<div class="b" style="left:1410.40px;top:516.10px;width:1055.40px;height:53.00px;background:#f3f4f6;border-bottom:1px solid #e4e6ea;border-radius:10px 10px 0 0;"></div>
<svg class="b" style="left:1429.90px;top:535.30px;" width="9" height="14" viewBox="0 0 9 14"><circle cx="1.90" cy="1.60" r="1.2" fill="#44474d"/><circle cx="5.95" cy="1.60" r="1.2" fill="#44474d"/><circle cx="1.90" cy="6.20" r="1.2" fill="#44474d"/><circle cx="5.95" cy="6.20" r="1.2" fill="#44474d"/><circle cx="1.90" cy="10.80" r="1.2" fill="#44474d"/><circle cx="5.95" cy="10.80" r="1.2" fill="#44474d"/></svg>
<span class="t" style="left:1450.40px;top:526.65px;font-size:14px;line-height:14px;color:#1c1e21;letter-spacing:0.444px;-webkit-text-stroke:0.5px #1c1e21;">Conversion Snapshot</span>
<span class="t" style="left:1450.40px;top:545.44px;font-size:12px;line-height:12px;color:#6b7076;letter-spacing:0.274px;">Overview of how deals have moved between sales stages.</span>
<svg class="b" style="left:2436.20px;top:536.60px;" width="10" height="10" viewBox="0 0 10 10"><path d="M0.9 0.9 L9.1 9.1 M9.1 0.9 L0.9 9.1" stroke="#111" stroke-width="1.5" stroke-linecap="round"/></svg>
<svg class="b" style="left:2457.60px;top:970.10px;" width="6.5" height="6.5" viewBox="0 0 6.5 6.5"><path d="M5.6 0.3 V5.6 H0.3" stroke="#444" stroke-width="1.7" fill="none"/></svg>
<span class="t" style="left:1427.60px;top:586.74px;font-size:12px;line-height:12px;color:#5f656d;letter-spacing:-0.111px;">WIN RATE (SNAPSHOT)</span>
<span class="t" style="left:1427.60px;top:605.24px;font-size:25px;line-height:25px;color:#1c1e21;font-weight:700;letter-spacing:0.496px;">20</span>
<span class="t" style="left:1461.50px;top:605.96px;font-size:16px;line-height:16px;color:#1c1e21;-webkit-text-stroke:0.3px #1c1e21;">%</span>
<span class="t" style="left:1427.60px;top:634.94px;font-size:12px;line-height:12px;color:#6b7076;letter-spacing:0.257px;">2 vunna av 10 affärer totalt, 1 förlorade.</span>
<span class="t" style="left:1427.60px;top:662.94px;font-size:12px;line-height:12px;color:#6b7076;letter-spacing:0.323px;">Fördelning per steg (aktiva affärer)</span>
<span class="t" style="left:1427.60px;top:682.64px;font-size:12px;line-height:12px;color:#1c1e21;letter-spacing:0.397px;-webkit-text-stroke:0.35px #1c1e21;">Recognition of needs</span>
<span class="t" style="right:108.37px;top:682.64px;font-size:12px;line-height:12px;color:#5b6068;letter-spacing:0.327px;">3 st · 43%</span>
<div class="b" style="left:1427.60px;top:699.00px;width:1023.00px;height:6.00px;background:#f1f2f4;border-radius:3px;"></div>
<div class="b" style="left:1427.60px;top:699.00px;width:439.89px;height:6.00px;background:#67bfd3;border-radius:3px 0 0 3px;"></div>
<span class="t" style="left:1427.60px;top:710.64px;font-size:12px;line-height:12px;color:#1c1e21;letter-spacing:0.396px;-webkit-text-stroke:0.35px #1c1e21;">Evaluation of Options</span>
<span class="t" style="right:108.41px;top:710.64px;font-size:12px;line-height:12px;color:#5b6068;letter-spacing:0.287px;">2 st · 29%</span>
<div class="b" style="left:1427.60px;top:727.00px;width:1023.00px;height:6.00px;background:#f1f2f4;border-radius:3px;"></div>
<div class="b" style="left:1427.60px;top:727.00px;width:296.67px;height:6.00px;background:#67bfd3;border-radius:3px 0 0 3px;"></div>
<span class="t" style="left:1427.60px;top:738.64px;font-size:12px;line-height:12px;color:#1c1e21;letter-spacing:0.398px;-webkit-text-stroke:0.35px #1c1e21;">Resolution of Concern</span>
<span class="t" style="right:108.68px;top:738.64px;font-size:12px;line-height:12px;color:#5b6068;letter-spacing:0.017px;">1 st · 14%</span>
<div class="b" style="left:1427.60px;top:755.00px;width:1023.00px;height:6.00px;background:#f1f2f4;border-radius:3px;"></div>
<div class="b" style="left:1427.60px;top:755.00px;width:143.22px;height:6.00px;background:#67bfd3;border-radius:3px 0 0 3px;"></div>
<span class="t" style="left:1427.60px;top:766.64px;font-size:12px;line-height:12px;color:#1c1e21;letter-spacing:0.481px;-webkit-text-stroke:0.35px #1c1e21;">Negotiation</span>
<span class="t" style="right:108.68px;top:766.64px;font-size:12px;line-height:12px;color:#5b6068;letter-spacing:0.017px;">1 st · 14%</span>
<div class="b" style="left:1427.60px;top:783.00px;width:1023.00px;height:6.00px;background:#f1f2f4;border-radius:3px;"></div>
<div class="b" style="left:1427.60px;top:783.00px;width:143.22px;height:6.00px;background:#67bfd3;border-radius:3px 0 0 3px;"></div>
<span class="t" style="left:1427.60px;top:803.33px;font-size:10px;line-height:10px;color:#62676f;letter-spacing:0.385px;">Snapshot-baserad konvertering: bygger på nuvarande stegstatus, inte historiska stegbyten. För mer exakt funnel kan vi senare använda deal_stage_history.</span>
<div class="b" style="left:336.00px;top:995.20px;width:2130.80px;height:600.00px;background:#fff;border:1px solid #e4e6ea;border-radius:11px;box-shadow:0 1px 2px rgba(0,0,0,0.05);overflow:hidden;"></div>
<div class="b" style="left:337.00px;top:996.20px;width:2128.80px;height:53.00px;background:#f3f4f6;border-bottom:1px solid #e4e6ea;border-radius:10px 10px 0 0;"></div>
<svg class="b" style="left:356.50px;top:1015.40px;" width="9" height="14" viewBox="0 0 9 14"><circle cx="1.90" cy="1.60" r="1.2" fill="#44474d"/><circle cx="5.95" cy="1.60" r="1.2" fill="#44474d"/><circle cx="1.90" cy="6.20" r="1.2" fill="#44474d"/><circle cx="5.95" cy="6.20" r="1.2" fill="#44474d"/><circle cx="1.90" cy="10.80" r="1.2" fill="#44474d"/><circle cx="5.95" cy="10.80" r="1.2" fill="#44474d"/></svg>
<span class="t" style="left:377.00px;top:1006.75px;font-size:14px;line-height:14px;color:#1c1e21;letter-spacing:0.667px;-webkit-text-stroke:0.5px #1c1e21;">Activities</span>
<span class="t" style="left:377.00px;top:1025.54px;font-size:12px;line-height:12px;color:#6b7076;letter-spacing:0.363px;">Completed sales activities during the selected period.</span>
<svg class="b" style="left:2436.20px;top:1016.70px;" width="10" height="10" viewBox="0 0 10 10"><path d="M0.9 0.9 L9.1 9.1 M9.1 0.9 L0.9 9.1" stroke="#111" stroke-width="1.5" stroke-linecap="round"/></svg>
<svg class="b" style="left:2457.60px;top:1586.20px;" width="6.5" height="6.5" viewBox="0 0 6.5 6.5"><path d="M5.6 0.3 V5.6 H0.3" stroke="#444" stroke-width="1.7" fill="none"/></svg>
<span class="t" style="left:353.20px;top:1067.89px;font-size:11px;line-height:11px;color:#5f656d;letter-spacing:0.184px;">BOKADE AKTIVITETER</span>
<span class="t" style="left:353.20px;top:1091.62px;font-size:12.5px;line-height:12.5px;color:#222428;letter-spacing:0.206px;-webkit-text-stroke:0.2px #222428;">CRM replacement exploration · Bokad aktivitet</span>
<span class="t" style="left:624.20px;top:1093.74px;font-size:10px;line-height:10px;color:#62676e;letter-spacing:0.317px;-webkit-text-stroke:0.15px #62676e;">· Lead</span>
<span class="t" style="left:353.20px;top:1107.54px;font-size:12px;line-height:12px;color:#6b7076;letter-spacing:0.320px;">Validate scope and urgency of CRM replacement discussion</span>
<span class="t" style="right:109.78px;top:1092.89px;font-size:11px;line-height:11px;color:#62676f;letter-spacing:-0.084px;">21 maj 2026 02:00</span>
<div class="b" style="left:353.20px;top:1126.00px;width:2096.60px;height:1.00px;background:#e7e8eb;"></div>
<span class="t" style="left:353.20px;top:1136.62px;font-size:12.5px;line-height:12.5px;color:#222428;letter-spacing:0.111px;-webkit-text-stroke:0.2px #222428;">European expansion sales readiness — Horizon Retail Systems · Bokad aktivitet</span>
<span class="t" style="left:812.50px;top:1138.74px;font-size:10px;line-height:10px;color:#62676e;letter-spacing:0.317px;-webkit-text-stroke:0.15px #62676e;">· Deal</span>
<span class="t" style="left:353.20px;top:1152.54px;font-size:12px;line-height:12px;color:#6b7076;letter-spacing:0.273px;">Exploratory call</span>
<span class="t" style="right:109.86px;top:1137.89px;font-size:11px;line-height:11px;color:#62676f;letter-spacing:-0.164px;">18 mars 2026 01:00</span>
<div class="b" style="left:353.20px;top:1171.00px;width:2096.60px;height:1.00px;background:#e7e8eb;"></div>
<span class="t" style="left:353.20px;top:1181.62px;font-size:12.5px;line-height:12.5px;color:#222428;letter-spacing:0.233px;-webkit-text-stroke:0.2px #222428;">Technical tooling reassessment · Bokad aktivitet</span>
<span class="t" style="left:634.50px;top:1183.74px;font-size:10px;line-height:10px;color:#62676e;letter-spacing:0.317px;-webkit-text-stroke:0.15px #62676e;">· Lead</span>
<span class="t" style="left:353.20px;top:1197.54px;font-size:12px;line-height:12px;color:#6b7076;letter-spacing:0.387px;">Technical intro to understand current constraints and veto criteria</span>
<span class="t" style="right:109.86px;top:1182.89px;font-size:11px;line-height:11px;color:#62676f;letter-spacing:-0.164px;">18 mars 2026 01:00</span>
<div class="b" style="left:353.20px;top:1216.00px;width:2096.60px;height:1.00px;background:#e7e8eb;"></div>
<span class="t" style="left:353.20px;top:1226.62px;font-size:12.5px;line-height:12.5px;color:#222428;letter-spacing:0.255px;-webkit-text-stroke:0.2px #222428;">Pipeline visibility improvement · Bokad aktivitet</span>
<span class="t" style="left:628.80px;top:1228.74px;font-size:10px;line-height:10px;color:#62676e;letter-spacing:0.317px;-webkit-text-stroke:0.15px #62676e;">· Lead</span>
<span class="t" style="left:353.20px;top:1242.54px;font-size:12px;line-height:12px;color:#6b7076;letter-spacing:0.290px;">Sounding call to assess sales management priorities.</span>
<span class="t" style="right:109.74px;top:1227.89px;font-size:11px;line-height:11px;color:#62676f;letter-spacing:-0.042px;">25 feb. 2026 01:00</span>
<div class="b" style="left:353.20px;top:1261.00px;width:2096.60px;height:1.00px;background:#e7e8eb;"></div>
<span class="t" style="left:353.20px;top:1271.62px;font-size:12.5px;line-height:12.5px;color:#222428;letter-spacing:0.244px;-webkit-text-stroke:0.2px #222428;">Reporting standardisation programme — Northshore Analytics Ltd · Bokad aktivitet</span>
<span class="t" style="left:833.90px;top:1273.74px;font-size:10px;line-height:10px;color:#62676e;letter-spacing:0.317px;-webkit-text-stroke:0.15px #62676e;">· Deal</span>
<span class="t" style="left:353.20px;top:1287.54px;font-size:12px;line-height:12px;color:#6b7076;letter-spacing:0.313px;">Discovery workshop</span>
<span class="t" style="right:109.74px;top:1272.89px;font-size:11px;line-height:11px;color:#62676f;letter-spacing:-0.042px;">24 feb. 2026 01:00</span>
<div class="b" style="left:353.20px;top:1306.00px;width:2096.60px;height:1.00px;background:#e7e8eb;"></div>
<span class="t" style="left:353.20px;top:1316.62px;font-size:12.5px;line-height:12.5px;color:#222428;letter-spacing:0.199px;-webkit-text-stroke:0.2px #222428;">Enterprise sales tooling alignment — Polaris Cybersecurity AB · Bokad aktivitet</span>
<span class="t" style="left:809.90px;top:1318.74px;font-size:10px;line-height:10px;color:#62676e;letter-spacing:0.317px;-webkit-text-stroke:0.15px #62676e;">· Deal</span>
<span class="t" style="left:353.20px;top:1332.54px;font-size:12px;line-height:12px;color:#6b7076;letter-spacing:0.491px;">Discovery workshop call</span>
<span class="t" style="right:109.74px;top:1317.89px;font-size:11px;line-height:11px;color:#62676f;letter-spacing:-0.042px;">22 feb. 2026 01:00</span>
<div class="b" style="left:353.20px;top:1351.00px;width:2096.60px;height:1.00px;background:#e7e8eb;"></div>
</div>
</body></html>
